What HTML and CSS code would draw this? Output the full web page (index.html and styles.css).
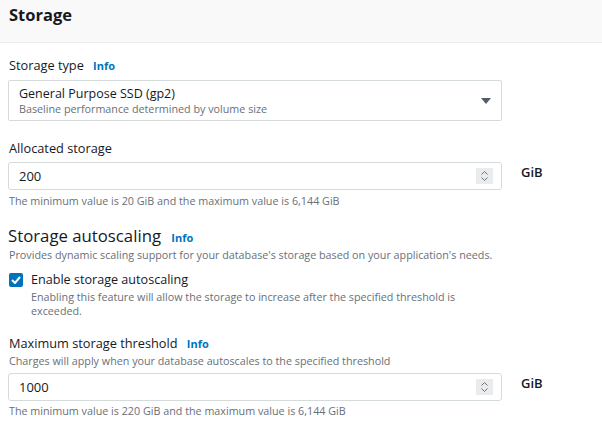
FILE: index.html
```html
<!DOCTYPE html>
<html>
<head>
<meta charset="utf-8">
<link rel="stylesheet" href="styles.css">
</head>
<body>
<div class="header"><h2 class="title">Storage</h2></div>
<div class="content">
  <div class="field f-type">
    <div class="label">Storage type <span class="info">Info</span></div>
    <div class="select">
      <div class="select-text">
        <div class="select-main">General Purpose SSD (gp2)</div>
        <div class="select-sub">Baseline performance determined by volume size</div>
      </div>
      <svg class="caret" width="10" height="6" viewBox="0 0 10 6"><path d="M0 0H10L5 6Z" fill="#545b64"/></svg>
    </div>
  </div>

  <div class="field f-alloc">
    <div class="label">Allocated storage</div>
    <div class="input-row">
      <div class="input">
        <span class="value">200</span>
        <span class="spinner"><svg width="9" height="12" viewBox="0 0 9 12"><path d="M1.5 4.5L4.5 1.5L7.5 4.5M1.5 7.5L4.5 10.5L7.5 7.5" fill="none" stroke="#6b7279" stroke-width="1"/></svg></span>
      </div>
      <span class="unit">GiB</span>
    </div>
    <div class="hint">The minimum value is 20 GiB and the maximum value is 6,144 GiB</div>
  </div>

  <div class="section">
    <h3 class="section-title">Storage autoscaling <span class="info">Info</span></h3>
    <div class="desc">Provides dynamic scaling support for your database's storage based on your application's needs.</div>
  </div>

  <div class="check">
    <span class="box"><svg width="10" height="8" viewBox="0 0 10 8"><path d="M1 4L4 7L9 1" fill="none" stroke="#fff" stroke-width="2"/></svg></span>
    <div class="check-text">
      <div class="check-label">Enable storage autoscaling</div>
      <div class="check-desc">Enabling this feature will allow the storage to increase after the specified threshold is exceeded.</div>
    </div>
  </div>

  <div class="field f-max">
    <div class="label">Maximum storage threshold <span class="info">Info</span></div>
    <div class="desc">Charges will apply when your database autoscales to the specified threshold</div>
    <div class="input-row">
      <div class="input">
        <span class="value">1000</span>
        <span class="spinner"><svg width="9" height="12" viewBox="0 0 9 12"><path d="M1.5 4.5L4.5 1.5L7.5 4.5M1.5 7.5L4.5 10.5L7.5 7.5" fill="none" stroke="#6b7279" stroke-width="1"/></svg></span>
      </div>
      <span class="unit">GiB</span>
    </div>
    <div class="hint">The minimum value is 220 GiB and the maximum value is 6,144 GiB</div>
  </div>
</div>
</body>
</html>
```

FILE: styles.css
```css
* { box-sizing: border-box; }
body {
  margin: 0;
  background: #fff;
  font-family: "Open Sans", "Noto Sans", sans-serif;
  color: #16191f;
}
.header {
  height: 43px;
  background: #f9f9f9;
  border-bottom: 1px solid #eaeded;
  padding: 5px 9px 0;
}
.title {
  margin: 0;
  font-size: 16.5px;
  font-weight: 700;
  line-height: 20px;
}
.content { padding: 0 8px; }
.label {
  font-size: 12.75px;
  line-height: 18px;
  padding-left: 1px;
}
.info {
  color: #0073bb;
  font-weight: 700;
  font-size: 11px;
  margin-left: 6px;
}
.f-type { margin-top: 13px; }
.f-type .label { margin-bottom: 5px; }
.select {
  width: 494px;
  height: 41px;
  border: 1px solid #d5dbdb;
  border-radius: 2px;
  display: flex;
  align-items: center;
  padding: 0 10px 0 10px;
}
.select-text { flex: 1; }
.select-main { font-size: 12.5px; line-height: 16px; }
.select-sub { font-size: 10.75px; line-height: 14px; color: #687078; }
.f-alloc { margin-top: 18px; }
.f-alloc .label { margin-bottom: 5px; }
.input-row { display: flex; align-items: flex-start; }
.input {
  width: 494px;
  height: 28px;
  border: 1px solid #d5dbdb;
  border-radius: 3px;
  display: flex;
  align-items: center;
  padding: 0 8px 0 10px;
}
.value { flex: 1; font-size: 13px; }
.spinner {
  width: 17px;
  height: 16px;
  background: #eaebed;
  display: flex;
  align-items: center;
  justify-content: center;
}
.unit {
  margin-left: 19px;
  font-size: 13px;
  font-weight: 600;
  line-height: 16px;
  margin-top: 2px;
}
.hint {
  font-size: 10.75px;
  line-height: 14px;
  color: #687078;
  margin-top: 4px;
  padding-left: 1px;
}
.section { margin-top: 18px; }
.section-title {
  margin: 0;
  font-size: 16.75px;
  font-weight: 400;
  line-height: 20px;
}
.desc {
  font-size: 10.75px;
  line-height: 14px;
  color: #687078;
  padding-left: 1px;
}
.check {
  display: flex;
  margin-top: 10px;
  padding-left: 1px;
}
.box {
  width: 14px;
  height: 14px;
  background: #0073bb;
  border-radius: 2px;
  display: flex;
  align-items: center;
  justify-content: center;
  margin-top: 1px;
  flex: none;
}
.check-text { margin-left: 8px; width: 450px; }
.check-label { font-size: 12.6px; line-height: 16px; }
.check-desc { font-size: 10.75px; line-height: 14px; color: #687078; margin-top: 2px; }
.f-max { margin-top: 16px; }
.f-max .desc { margin-top: 1px; margin-bottom: 5px; }
.f-max .hint { margin-top: 3px; }
```
